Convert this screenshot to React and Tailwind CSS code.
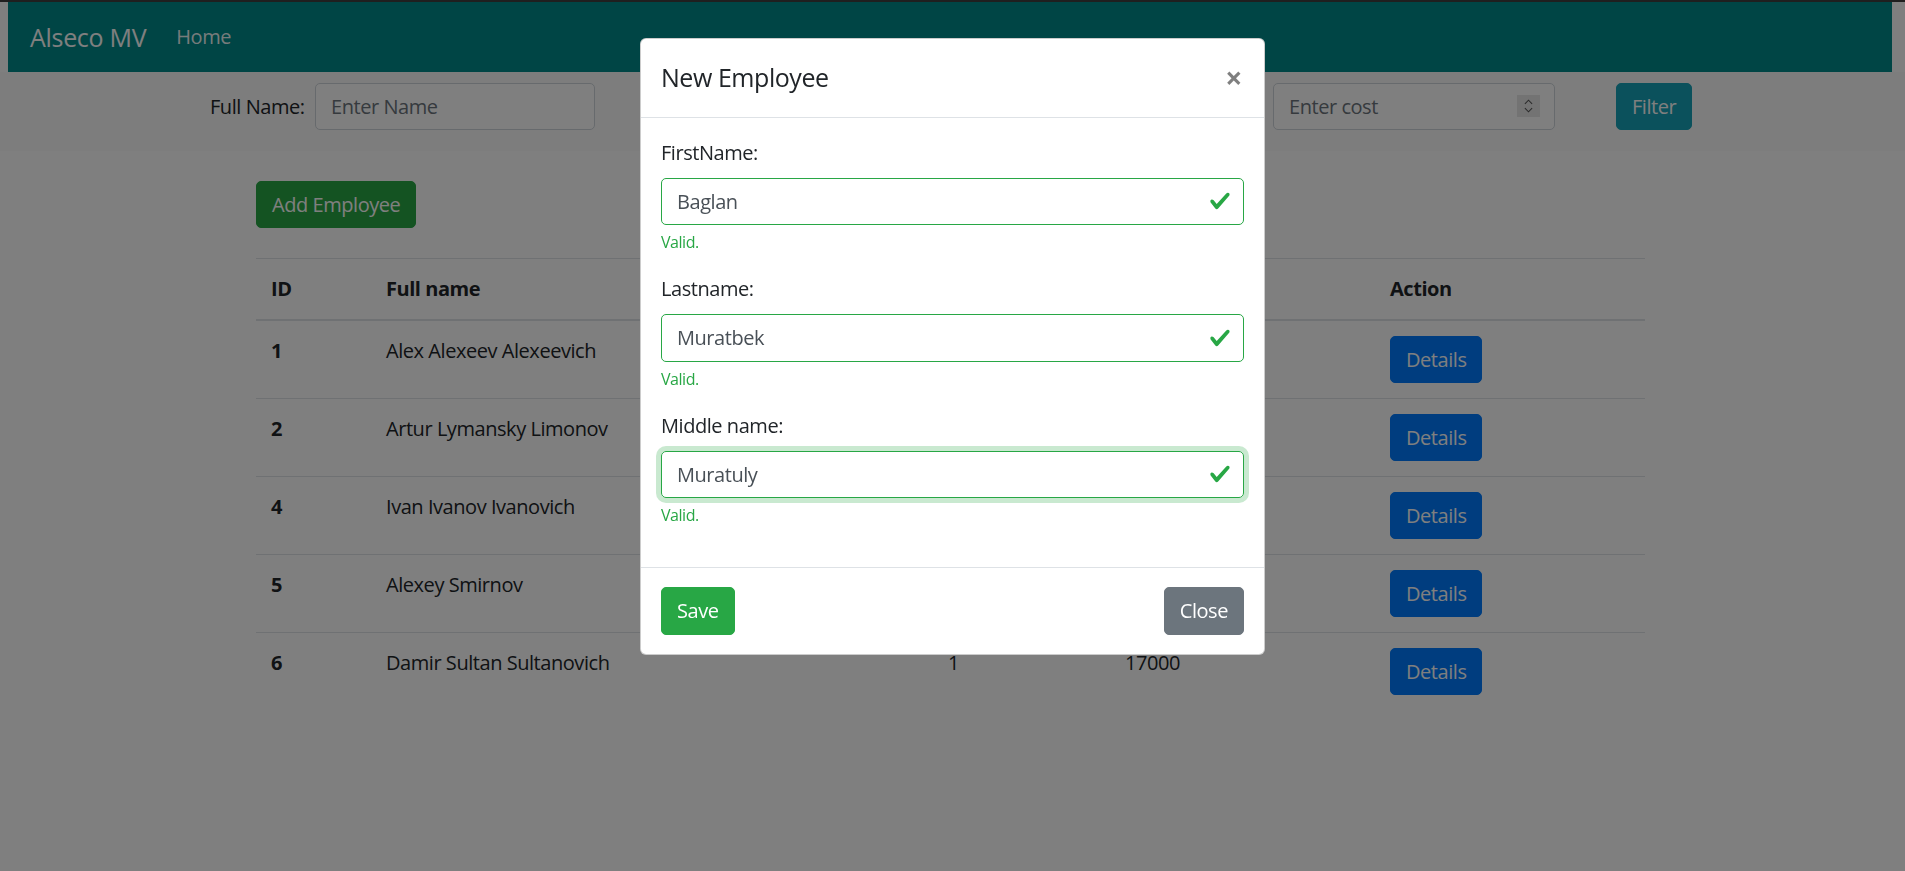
const employees = [
  { id: 1, name: 'Alex Alexeev Alexeevich', dept: 1, cost: 150000 },
  { id: 2, name: 'Artur Lymansky Limonov', dept: 2, cost: 200000 },
  { id: 4, name: 'Ivan Ivanov Ivanovich', dept: 1, cost: 120000 },
  { id: 5, name: 'Alexey Smirnov', dept: 3, cost: 90000 },
  { id: 6, name: 'Damir Sultan Sultanovich', dept: 1, cost: 17000 },
]

const fields = [
  { label: 'FirstName:', value: 'Baglan' },
  { label: 'Lastname:', value: 'Muratbek' },
  { label: 'Middle name:', value: 'Muratuly', focused: true },
]

function Check() {
  return (
    <svg viewBox="0 0 8 8" className="w-[22px] h-[22px]">
      <path fill="#28a745" d="M2.3 6.73L.6 4.53c-.4-1.04.46-1.4 1.1-.8l1.1 1.4 3.4-3.8c.6-.63 1.6-.27 1.2.7l-4 4.6c-.43.5-.8.4-1.1.1z" />
    </svg>
  )
}

export default function App() {
  return (
    <div className="relative min-h-screen bg-white text-[20px] leading-[30px] tracking-[-0.45px] text-[#212529] font-['Segoe_UI','Open_Sans',sans-serif]">
      {/* top edge */}
      <div className="relative z-[60] h-[2px] bg-[#1f1f1f]" />

      {/* Navbar */}
      <nav className="ml-[8px] mr-[13px] h-[70px] bg-[#008b8b] pl-[22px] pr-[20px] flex items-center">
        <span className="text-white text-[25px] leading-[37px] tracking-[-0.3px] mr-[30px]">Alseco MV</span>
        <a className="text-white/95">Home</a>
      </nav>

      {/* Filters */}
      <div className="bg-[#fafafa] pt-[11px] pb-[21px] pl-[210px] flex items-center">
        <label className="w-[105px]">Full Name:</label>
        <input className="w-[280px] h-[47px] border border-[#ced4da] rounded-[5px] px-[15px] text-[#495057] placeholder:text-[#6c757d] bg-white" placeholder="Enter Name" />
        <div className="w-[678px] flex items-center pl-[70px] gap-[11px]">
          <label>Department:</label>
          <select className="w-[220px] h-[47px] border border-[#ced4da] rounded-[5px] px-[15px] bg-white text-[#495057]">
            <option>All</option>
          </select>
          <label className="ml-auto mr-[70px]">Cost:</label>
        </div>
        <div className="relative w-[282px]">
          <input className="w-full h-[47px] border border-[#ced4da] rounded-[5px] px-[15px] text-[#495057] placeholder:text-[#6c757d] bg-white" placeholder="Enter cost" />
          <div className="absolute right-[15px] top-[12px] w-[23px] h-[22px] bg-[#e6e6e6] flex flex-col items-center justify-center text-[#555]">
            <svg viewBox="0 0 10 6" className="w-[9px] h-[6px]"><path d="M1 5L5 1L9 5" fill="none" stroke="currentColor" strokeWidth="1.2" /></svg>
            <svg viewBox="0 0 10 6" className="w-[9px] h-[6px] mt-[2px]"><path d="M1 1L5 5L9 1" fill="none" stroke="currentColor" strokeWidth="1.2" /></svg>
          </div>
        </div>
        <button className="ml-[61px] h-[47px] px-[15px] rounded-[5px] bg-[#17a2b8] border border-[#17a2b8] text-white">Filter</button>
      </div>

      {/* Content */}
      <div className="ml-[256px] w-[1389px] pt-[30px]">
        <button className="h-[47px] px-[15px] rounded-[5px] bg-[#28a745] border border-[#28a745] text-white">Add Employee</button>
        <table className="w-full table-fixed mt-[30px] text-left">
          <colgroup>
            <col className="w-[115px]" />
            <col className="w-[562px]" />
            <col className="w-[177px]" />
            <col className="w-[265px]" />
            <col className="w-[270px]" />
          </colgroup>
          <thead>
            <tr>
              {['ID', 'Full name', 'Department', 'Cost', 'Action'].map((h) => (
                <th key={h} className="p-[15px] font-bold align-bottom border-t border-b-2 border-[#dee2e6]">{h}</th>
              ))}
            </tr>
          </thead>
          <tbody>
            {employees.map((e) => (
              <tr key={e.id}>
                <td className="p-[15px] align-top border-t border-[#dee2e6] font-bold">{e.id}</td>
                <td className="p-[15px] align-top border-t border-[#dee2e6]">{e.name}</td>
                <td className="p-[15px] align-top border-t border-[#dee2e6]">{e.dept}</td>
                <td className="p-[15px] align-top border-t border-[#dee2e6]">{e.cost}</td>
                <td className="p-[15px] align-top border-t border-[#dee2e6]">
                  <button className="h-[47px] px-[15px] rounded-[5px] bg-[#007bff] border border-[#007bff] text-white">Details</button>
                </td>
              </tr>
            ))}
          </tbody>
        </table>
      </div>

      {/* Backdrop */}
      <div className="fixed inset-0 z-40 bg-black/50" />

      {/* Modal */}
      <div className="fixed inset-0 z-50 flex justify-center pt-[38px]">
        <div className="w-[625px] h-fit bg-white border border-black/20 rounded-[6px]">
          <div className="flex items-start justify-between p-[20px] border-b border-[#dee2e6]">
            <h5 className="text-[25px] leading-[37.5px] font-medium">New Employee</h5>
            <button className="text-[30px] leading-[30px] font-bold text-black/50 mt-[4px] mr-[2px]">×</button>
          </div>
          <div className="p-[20px]">
            {fields.map((f) => (
              <div key={f.label} className="mb-[20px]">
                <label className="block mb-[10px]">{f.label}</label>
                <div className="relative">
                  <input
                    readOnly
                    value={f.value}
                    className={
                      'w-full h-[47.5px] border border-[#28a745] rounded-[5px] pl-[15px] pr-[46px] text-[#495057] outline-none ' +
                      (f.focused ? 'shadow-[0_0_0_5px_rgba(40,167,69,0.25)]' : '')
                    }
                  />
                  <div className="absolute right-[13px] top-1/2 -translate-y-1/2 flex">
                    <Check />
                  </div>
                </div>
                <div className="mt-[5px] text-[16px] leading-[24px] text-[#28a745]">Valid.</div>
              </div>
            ))}
          </div>
          <div className="flex items-center justify-between px-[20px] py-[19px] border-t border-[#dee2e6]">
            <button className="h-[47.5px] px-[15px] rounded-[5px] bg-[#28a745] border border-[#28a745] text-white">Save</button>
            <button className="h-[47.5px] px-[15px] rounded-[5px] bg-[#6c757d] border border-[#6c757d] text-white">Close</button>
          </div>
        </div>
      </div>
    </div>
  )
}
